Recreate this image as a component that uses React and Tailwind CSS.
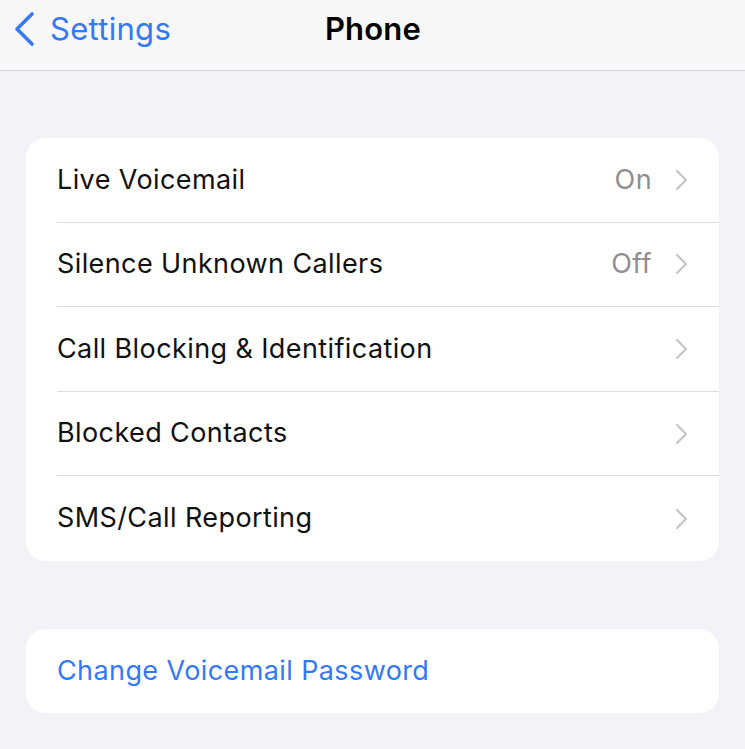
import React from "react";

const rows = [
  { label: "Live Voicemail", value: "On" },
  { label: "Silence Unknown Callers", value: "Off" },
  { label: "Call Blocking & Identification" },
  { label: "Blocked Contacts" },
  { label: "SMS/Call Reporting" },
];

const Chevron = () => (
  <svg width="13" height="22" viewBox="0 0 13 22" fill="none">
    <path d="M2 2l9 9-9 9" stroke="#c4c4c7" strokeWidth="2.2" strokeLinecap="round" strokeLinejoin="round" />
  </svg>
);

export default function App() {
  return (
    <div className="min-h-[749px] w-[745px] bg-[#f2f2f7] font-['Inter','Liberation_Sans',sans-serif] overflow-hidden">
      {/* nav bar */}
      <div className="h-[71px] bg-[#f7f7f7] border-b border-[#d4d4d8] relative flex items-start">
        <div className="flex items-center h-[58px] pl-[13px] gap-[15px] text-[#3478f6]">
          <svg width="22" height="36" viewBox="0 0 22 36" fill="none">
            <path d="M19 3L4 18l15 15" stroke="#3478f6" strokeWidth="3.6" strokeLinecap="round" strokeLinejoin="round" />
          </svg>
          <span className="text-[31px] tracking-[0.3px]">Settings</span>
        </div>
        <div className="absolute left-0 right-0 top-0 h-[58px] flex items-center justify-center pl-[1px]">
          <span className="text-[31px] font-semibold text-black tracking-[0.2px]">Phone</span>
        </div>
      </div>

      <div className="px-[26px] pt-[67px]">
        <div className="bg-white rounded-[20px] overflow-hidden">
          {rows.map((r, i) => (
            <div key={r.label} className="flex items-center h-[84.6px] pl-[31px]">
              <div
                className={`flex-1 h-full flex items-center pr-[31px] ${i < rows.length - 1 ? "border-b border-[#dcdce0]" : ""}`}
              >
                <span className="flex-1 text-[27px] text-[#111] tracking-[0.4px]">{r.label}</span>
                {r.value && (
                  <span className="text-[27px] text-[#8e8e93] mr-[23px] tracking-[0.4px]">{r.value}</span>
                )}
                <Chevron />
              </div>
            </div>
          ))}
        </div>

        <div className="bg-white rounded-[20px] mt-[68px] h-[84px] flex items-center pl-[31px]">
          <span className="text-[27px] text-[#3478f6] tracking-[0.4px]">Change Voicemail Password</span>
        </div>
      </div>
    </div>
  );
}
